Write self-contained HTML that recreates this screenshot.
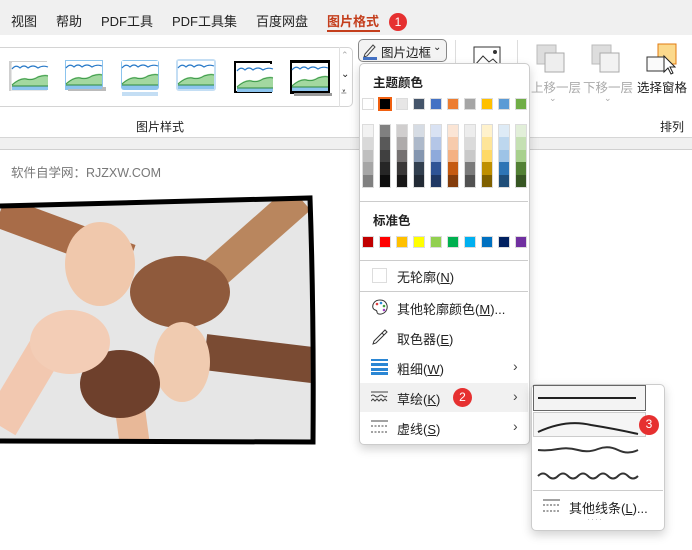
<!DOCTYPE html>
<html><head><meta charset="utf-8"><style>
*{margin:0;padding:0;box-sizing:border-box}
body{width:692px;height:550px;overflow:hidden;background:#fff;font-family:"Liberation Sans","Noto Sans CJK SC",sans-serif;position:relative;color:#222}
.a{position:absolute}
.t{font-size:13px;white-space:nowrap}
.sw{position:absolute;width:12px;height:12px;border:1px solid #dcdcdc}
.badge{position:absolute;width:18px;height:18px;border-radius:50%;background:#e63030;color:#fff;font-size:12px;text-align:center;line-height:18px}
u{text-decoration:underline}
</style></head><body>
<div class="a" style="left:0;top:0;width:692px;height:35px;background:#f0f0f0"></div>
<div class="a t" style="left:11px;top:11px;font-size:13px">视图</div>
<div class="a t" style="left:56px;top:11px;font-size:13px">帮助</div>
<div class="a t" style="left:101px;top:11px;font-size:13px">PDF工具</div>
<div class="a t" style="left:172px;top:11px;font-size:13px">PDF工具集</div>
<div class="a t" style="left:256px;top:11px;font-size:13px">百度网盘</div>
<div class="a t" style="left:327px;top:11px;font-size:13px;color:#c43e1c;font-weight:bold">图片格式</div>
<div class="a" style="left:327px;top:30px;width:53px;height:2px;background:#c43e1c"></div>
<div class="badge" style="left:389px;top:13px">1</div>
<div class="a" style="left:0;top:35px;width:692px;height:103px;background:#fff;border-bottom:1px solid #d6d6d6"></div>
<div class="a" style="left:0;top:138px;width:692px;height:12px;background:#f0f0f0;border-bottom:1px solid #d0d0d0"></div>
<div class="a" style="left:-6px;top:47px;width:359px;height:60px;border:1px solid #d4d4d4;border-radius:5px"></div>
<div class="a" style="left:339px;top:47px;width:1px;height:60px;background:#e0e0e0"></div>
<div class="a t" style="left:341px;top:50px;font-size:9px;color:#aaa">⌃</div>
<div class="a t" style="left:341px;top:69px;font-size:10px">⌄</div>
<div class="a t" style="left:341px;top:87px;font-size:10px">⩡</div>
<svg class="a" style="left:0;top:55px" width="340" height="48">
<defs><g id="th"><rect x="0" y="0" width="36" height="28" fill="#fff"/><path d="M0 7 q4-5 8 -1 q4-4 8 0 q5-4 10 0 q5-3 10-1" stroke="#2a7ac8" stroke-width="1.2" fill="none"/><path d="M0 22 q8-7 14-6 q6 2 12-2 q6-2 10 -1 V24 H0Z" fill="#a3d8a0"/><path d="M0 23 q8-7 14-6 q6 2 12-2 q6-2 10-1" stroke="#3d9a4a" fill="none"/><rect x="0" y="24" width="36" height="4" fill="#8cc4ee"/><line x1="0" y1="24" x2="36" y2="24" stroke="#2d8a3e"/></g></defs>
<rect x="9" y="6" width="38" height="30" fill="#cfcfcf"/><rect x="11" y="8" width="36" height="28" fill="#e6e6e6"/><use href="#th" x="12" y="7"/>
<rect x="65" y="5" width="38" height="30" fill="#8cc4ee"/><rect x="68" y="32" width="38" height="4" fill="#bbb"/><use href="#th" x="66" y="6"/>
<rect x="121" y="5" width="38" height="30" rx="3" fill="#8cc4ee"/><rect x="122" y="37" width="36" height="4" fill="#c4def4"/><use href="#th" x="122" y="6"/>
<rect x="176" y="4" width="40" height="32" rx="3" fill="#c4def4"/><use href="#th" x="178" y="6"/>
<rect x="234" y="6" width="38" height="32" fill="#000"/><rect x="236" y="8" width="34" height="28" fill="#fff"/><use href="#th" x="237" y="9"/>
<rect x="290" y="5" width="40" height="34" fill="#000"/><rect x="294" y="38" width="38" height="3" fill="#999"/><use href="#th" x="292" y="8"/>
</svg>
<div class="a t" style="left:136px;top:118px;font-size:12px">图片样式</div>
<div class="a" style="left:358px;top:39px;width:89px;height:23px;border:1px solid #888;border-radius:5px;background:#f3f3f3"></div>
<svg class="a" style="left:362px;top:42px" width="16" height="18"><path d="M3 12 L11 3 L13 5 L5 14 L2 15Z" fill="none" stroke="#444"/><rect x="1" y="15" width="14" height="3" fill="#4472c4"/></svg>
<div class="a t" style="left:381px;top:42px;font-size:12.5px">图片边框</div>
<div class="a t" style="left:433px;top:42px;font-size:10px">⌄</div>
<div class="a" style="left:455px;top:40px;width:1px;height:30px;background:#ddd"></div>
<svg class="a" style="left:473px;top:46px" width="30" height="22"><rect x="1" y="1" width="26" height="20" fill="none" stroke="#333"/><path d="M2 19 L10 10 L16 16 L20 13 L26 19" fill="none" stroke="#333"/><circle cx="22" cy="6" r="2" fill="#333"/></svg>
<div class="a" style="left:517px;top:40px;width:1px;height:30px;background:#ddd"></div>
<svg class="a" style="left:536px;top:44px" width="30" height="30"><rect x="1" y="1" width="19" height="19" fill="#ddd" stroke="#bbb"/><rect x="9" y="9" width="19" height="19" fill="#eee" stroke="#aaa"/></svg>
<svg class="a" style="left:591px;top:44px" width="30" height="30"><rect x="1" y="1" width="19" height="19" fill="#ddd" stroke="#bbb"/><rect x="9" y="9" width="19" height="19" fill="#f2f2f2" stroke="#aaa"/></svg>
<svg class="a" style="left:646px;top:43px" width="34" height="32"><rect x="12" y="1" width="18" height="20" fill="#fbd98c" stroke="#e07a10"/><rect x="1" y="14" width="18" height="14" fill="#fafafa" stroke="#333"/><path d="M18 13 L18 29 L22 25 L25 31 L27 30 L24 24 L29 24Z" fill="#fff" stroke="#222"/></svg>
<div class="a t" style="left:531px;top:77px;font-size:12.5px;color:#aaa">上移一层</div>
<div class="a t" style="left:583px;top:77px;font-size:12.5px;color:#aaa">下移一层</div>
<div class="a t" style="left:637px;top:77px;font-size:12.5px">选择窗格</div>
<div class="a t" style="left:549px;top:93px;font-size:9px;color:#aaa">⌄</div>
<div class="a t" style="left:604px;top:93px;font-size:9px;color:#aaa">⌄</div>
<div class="a t" style="left:660px;top:118px;font-size:12px">排列</div>
<div class="a t" style="left:11px;top:162px;font-size:12.5px;color:#777">软件自学网：RJZXW.COM</div>
<svg class="a" style="left:0;top:194px" width="320" height="252">
<defs><clipPath id="c"><path d="M0 12 L310 5 L311 248 L0 246Z"/></clipPath></defs>
<g clip-path="url(#c)">
<rect width="320" height="252" fill="#e6e6e6"/>
<path d="M0 18 L130 66" stroke="#a86c48" stroke-width="32"/>
<path d="M300 4 L205 88" stroke="#b9865e" stroke-width="32"/>
<path d="M320 172 L205 158" stroke="#7a4b33" stroke-width="36"/>
<path d="M0 232 L55 140" stroke="#f2c8b0" stroke-width="36"/>
<path d="M135 252 L130 215" stroke="#e8b898" stroke-width="30"/>
<ellipse cx="100" cy="70" rx="35" ry="42" fill="#f0c8ac"/>
<ellipse cx="180" cy="98" rx="50" ry="36" fill="#8f5a3c"/>
<ellipse cx="182" cy="168" rx="28" ry="40" fill="#f0cbb0"/>
<ellipse cx="120" cy="190" rx="40" ry="34" fill="#6e402c"/>
<ellipse cx="70" cy="148" rx="40" ry="32" fill="#f3cdb6"/>
</g>
<path d="M0 12 L310 4 Q314 120 313 248 L0 247" fill="none" stroke="#000" stroke-width="5"/>
</svg>
<div class="a" style="left:359px;top:63px;width:171px;height:382px;background:#fff;border:1px solid #ccc;border-radius:5px;box-shadow:0 4px 10px rgba(0,0,0,.18)"></div>
<div class="a t" style="left:373px;top:72px;font-size:12.5px;font-weight:bold">主题颜色</div>
<div id="top"></div>
<div class="a" style="left:360px;top:201px;width:168px;height:1px;background:#ccc"></div>
<div class="a t" style="left:373px;top:210px;font-size:12.5px;font-weight:bold">标准色</div>
<div class="a" style="left:360px;top:260px;width:168px;height:1px;background:#ccc"></div>
<div class="a" style="left:372px;top:268px;width:15px;height:15px;border:1px solid #ddd"></div>
<div class="a t" style="left:397px;top:267px">无轮廓(<u>N</u>)</div>
<div class="a" style="left:360px;top:291px;width:168px;height:1px;background:#ccc"></div>
<svg class="a" style="left:371px;top:298px" width="18" height="18"><path d="M9 2 C3 2 1 7 2 10 C3 13 6 11 6 14 C6 17 12 17 15 13 C18 8 15 2 9 2Z" fill="none" stroke="#333"/><circle cx="6" cy="6" r="1.3" fill="#e04040"/><circle cx="10" cy="5" r="1.3" fill="#2a8ad4"/><circle cx="13" cy="8" r="1.3" fill="#40a040"/><circle cx="13" cy="12" r="1.3" fill="#a040c0"/></svg>
<div class="a t" style="left:397px;top:299px">其他轮廓颜色(<u>M</u>)...</div>
<svg class="a" style="left:371px;top:328px" width="18" height="18"><path d="M2 16 L3 13 L11 5 L13 7 L5 15Z M11 5 L14 2 L16 4 L13 7" fill="none" stroke="#333"/></svg>
<div class="a t" style="left:397px;top:329px">取色器(<u>E</u>)</div>
<svg class="a" style="left:371px;top:359px" width="18" height="16"><rect y="0" width="17" height="2" fill="#2a86d4"/><rect y="4" width="17" height="3" fill="#2a86d4"/><rect y="9" width="17" height="3" fill="#2a86d4"/><rect y="13" width="17" height="3" fill="#2a86d4"/></svg>
<div class="a t" style="left:397px;top:359px">粗细(<u>W</u>)</div>
<div class="a t" style="left:513px;top:358px;font-size:14px;color:#444">›</div>
<div class="a" style="left:360px;top:383px;width:168px;height:29px;background:#f1f1f1"></div>
<svg class="a" style="left:371px;top:390px" width="18" height="14"><path d="M0 2 h17 M0 6 q2-2 4 0 t4 0 t4 0 t4 0 M0 11 l2-2 2 2 2-2 2 2 2-2 2 2 2-2 2 2" fill="none" stroke="#444" stroke-width="1"/></svg>
<div class="a t" style="left:397px;top:389px">草绘(<u>K</u>)</div>
<div class="badge" style="left:453px;top:388px;width:19px;height:19px">2</div>
<div class="a t" style="left:513px;top:388px;font-size:14px;color:#444">›</div>
<svg class="a" style="left:371px;top:420px" width="18" height="14"><path d="M0 1 h17" stroke="#444"/><path d="M0 6 h17 M0 12 h17" stroke="#444" stroke-dasharray="2 1.5"/></svg>
<div class="a t" style="left:397px;top:419px">虚线(<u>S</u>)</div>
<div class="a t" style="left:513px;top:418px;font-size:14px;color:#444">›</div>
<div class="a" style="left:531px;top:384px;width:134px;height:147px;background:#fff;border:1px solid #ccc;border-radius:5px;box-shadow:0 4px 10px rgba(0,0,0,.18)"></div>
<div class="a" style="left:533px;top:385px;width:113px;height:26px;border:1px solid #666;background:#f3f3f3"></div>
<div class="a" style="left:538px;top:397px;width:98px;height:2px;background:#222"></div>
<div class="a" style="left:533px;top:412px;width:113px;height:25px;border:1px solid #ccc;background:#f5f5f5"></div>
<svg class="a" style="left:536px;top:414px" width="104" height="90"><path d="M2 18 Q30 5 55 11 Q80 15 102 20" fill="none" stroke="#222" stroke-width="2"/><path d="M2 36 q10 1 20-1 t20 1 t20-1 t20 1 t20 0" fill="none" stroke="#333" stroke-width="2"/><path d="M2 62 q5-5 10 0 t10 0 t10 0 t10 0 t10 0 t10 0 t10 0 t10 0 t10 0 t10 0" fill="none" stroke="#333" stroke-width="2"/></svg>
<div class="badge" style="left:639px;top:415px;width:20px;height:20px">3</div>
<div class="a" style="left:533px;top:490px;width:130px;height:1px;background:#ccc"></div>
<svg class="a" style="left:543px;top:499px" width="18" height="14"><path d="M0 1 h17" stroke="#444"/><path d="M0 6 h17 M0 12 h17" stroke="#444" stroke-dasharray="2 1.5"/></svg>
<div class="a t" style="left:569px;top:498px">其他线条(<u>L</u>)...</div>
<div class="a t" style="left:587px;top:514px;font-size:9px;color:#bbb;letter-spacing:1px">····</div>
<script>
var top1=["#fff","#000","#e7e6e6","#44546a","#4472c4","#ed7d31","#a5a5a5","#ffc000","#5b9bd5","#70ad47"];
var sh=[["#f2f2f2","#d9d9d9","#bfbfbf","#a6a6a6","#808080"],["#808080","#595959","#404040","#262626","#0d0d0d"],["#d0cece","#aeabab","#757171","#3a3838","#181717"],["#d6dce4","#adb9ca","#8496b0","#323f4f","#222a35"],["#d9e2f3","#b4c6e7","#8eaadb","#2f5496","#1f3864"],["#fbe5d5","#f7cbac","#f4b183","#c55a11","#843c0b"],["#ededed","#dbdbdb","#c9c9c9","#7b7b7b","#525252"],["#fff2cc","#fee599","#ffd966","#bf8f00","#7f6000"],["#deebf6","#bdd7ee","#9dc3e6","#2e75b5","#1f4e79"],["#e2efd9","#c5e0b3","#a8d08d","#538135","#375623"]];
var st=["#c00000","#ff0000","#ffc000","#ffff00","#92d050","#00b050","#00b0f0","#0070c0","#002060","#7030a0"];
var h="";
for(var i=0;i<10;i++){var x=362+i*17;
h+='<div class="sw" style="left:'+x+'px;top:98px;background:'+top1[i]+(i==1?';border:1px solid #f06010;outline:1px solid #f06010':'')+'"></div>';
h+='<div class="a" style="left:'+x+'px;top:124px;width:12px;height:64px;border:1px solid #dcdcdc">';
for(var j=0;j<5;j++)h+='<div style="height:12.4px;background:'+sh[i][j]+'"></div>';
h+='</div>';
h+='<div class="sw" style="left:'+x+'px;top:236px;background:'+st[i]+'"></div>';}
document.getElementById("top").outerHTML=h;
</script>
</body></html>
